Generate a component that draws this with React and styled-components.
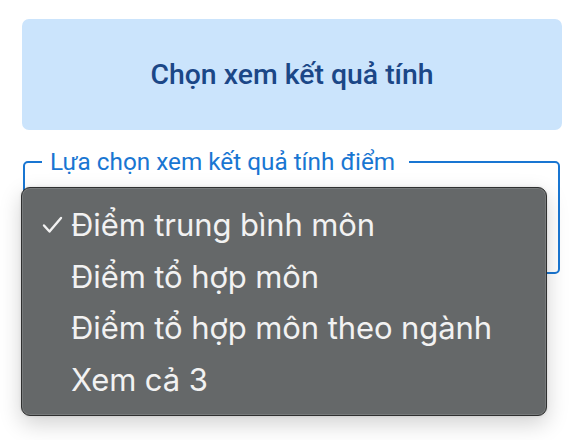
import React from 'react';
import styled, { createGlobalStyle } from 'styled-components';

const GlobalStyle = createGlobalStyle`
  html, body {
    margin: 0;
    padding: 0;
    background: #ffffff;
  }
  body {
    font-family: Roboto, "Liberation Sans", sans-serif;
  }
`;

const Page = styled.div`
  position: relative;
  width: 588px;
  height: 440px;
  padding: 19px 26px 0 22px;
  box-sizing: border-box;
  overflow: hidden;
`;

const HeaderCard = styled.div`
  height: 111px;
  border-radius: 7px;
  background: #cbe4fc;
  display: flex;
  align-items: center;
  justify-content: center;
  color: #1b4787;
  font-size: 28.4px;
  font-weight: 500;
`;

const Field = styled.fieldset`
  margin: 20px 2px 0 1px;
  height: 124px;
  box-sizing: border-box;
  border: 2px solid #1976d2;
  border-radius: 5px;
  padding: 0 12px;
`;

const Legend = styled.legend`
  margin-left: 5px;
  padding: 0 14px 0 8px;
  color: #1976d2;
  font-size: 24.3px;
  line-height: 24px;
`;

const Menu = styled.ul`
  position: absolute;
  left: 21px;
  top: 187px;
  width: 526px;
  height: 229px;
  box-sizing: border-box;
  margin: 0;
  padding: 11px 0 0;
  list-style: none;
  background: #656869;
  border: 1px solid #2f3030;
  border-radius: 9px;
  box-shadow: inset 0 0 0 1px rgba(255, 255, 255, 0.12),
    0 8px 22px rgba(0, 0, 0, 0.18), 0 0 3px rgba(0, 0, 0, 0.12);
  font-family: Inter, "Noto Sans", sans-serif;
`;

const Item = styled.li`
  display: flex;
  align-items: center;
  height: 51.5px;
  padding-left: 20px;
  color: #f2f2f2;
  font-size: 31px;
  letter-spacing: -0.1px;
`;

const Check = styled.span`
  width: 29px;
  display: inline-flex;
  align-items: center;
`;

const CheckIcon = () => (
  <svg width="21" height="18" viewBox="0 0 21 18">
    <path
      d="M2 9.5 L7.5 15.5 L19 2"
      fill="none"
      stroke="#f2f2f2"
      strokeWidth="2.4"
      strokeLinecap="round"
      strokeLinejoin="round"
    />
  </svg>
);

const options = [
  'Điểm trung bình môn',
  'Điểm tổ hợp môn',
  'Điểm tổ hợp môn theo ngành',
  'Xem cả 3',
];

export default function App() {
  const selected = 0;
  return (
    <Page>
      <GlobalStyle />
      <HeaderCard>Chọn xem kết quả tính</HeaderCard>
      <Field>
        <Legend>Lựa chọn xem kết quả tính điểm</Legend>
      </Field>
      <Menu>
        {options.map((o, i) => (
          <Item key={o}>
            <Check>{i === selected && <CheckIcon />}</Check>
            {o}
          </Item>
        ))}
      </Menu>
    </Page>
  );
}
